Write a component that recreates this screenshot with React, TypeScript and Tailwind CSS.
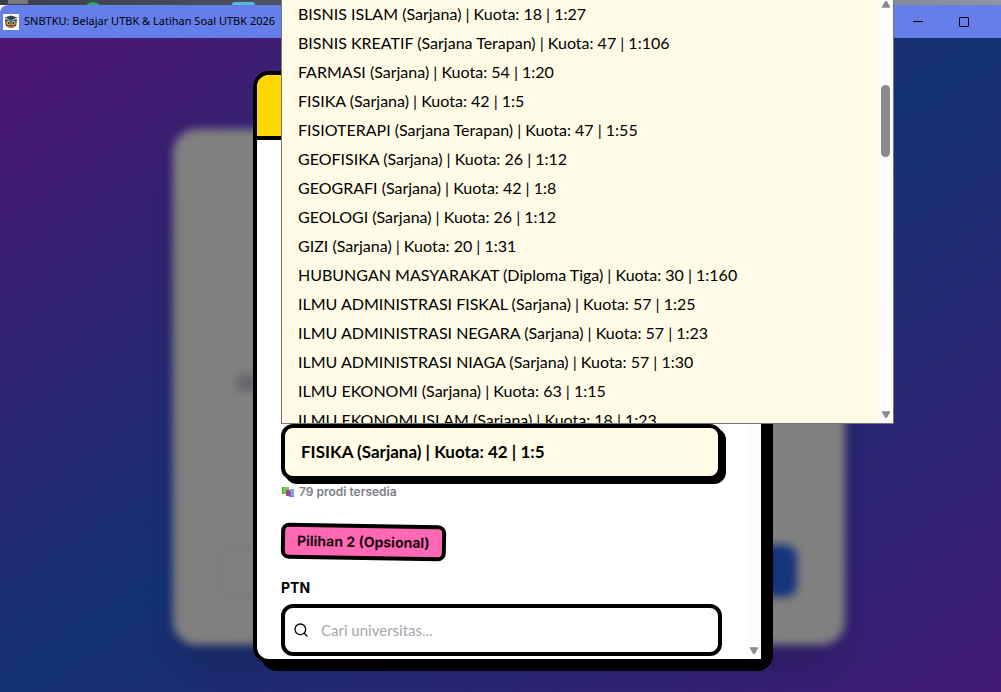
import { Search } from "lucide-react";

const programs = [
  "BISNIS ISLAM (Sarjana) | Kuota: 18 | 1:27",
  "BISNIS KREATIF (Sarjana Terapan) | Kuota: 47 | 1:106",
  "FARMASI (Sarjana) | Kuota: 54 | 1:20",
  "FISIKA (Sarjana) | Kuota: 42 | 1:5",
  "FISIOTERAPI (Sarjana Terapan) | Kuota: 47 | 1:55",
  "GEOFISIKA (Sarjana) | Kuota: 26 | 1:12",
  "GEOGRAFI (Sarjana) | Kuota: 42 | 1:8",
  "GEOLOGI (Sarjana) | Kuota: 26 | 1:12",
  "GIZI (Sarjana) | Kuota: 20 | 1:31",
  "HUBUNGAN MASYARAKAT (Diploma Tiga) | Kuota: 30 | 1:160",
  "ILMU ADMINISTRASI FISKAL (Sarjana) | Kuota: 57 | 1:25",
  "ILMU ADMINISTRASI NEGARA (Sarjana) | Kuota: 57 | 1:23",
  "ILMU ADMINISTRASI NIAGA (Sarjana) | Kuota: 57 | 1:30",
  "ILMU EKONOMI (Sarjana) | Kuota: 63 | 1:15",
  "ILMU EKONOMI ISLAM (Sarjana) | Kuota: 18 | 1:23",
];

function Arrow({ up = false }: { up?: boolean }) {
  return (
    <svg viewBox="0 0 10 8" className={up ? "w-[10px] h-2 rotate-180" : "w-[10px] h-2"} aria-hidden="true">
      <path d="M1.2 .8h7.6L5.6 6.4q-.6.8-1.2 0z" fill="#8b8b8b" stroke="#8b8b8b" strokeLinejoin="round" />
    </svg>
  );
}

function OwlIcon() {
  return (
    <svg viewBox="0 0 16 16" className="w-4 h-4 shrink-0" aria-hidden="true">
      <path fill="#fff" d="M0 0h16v16H0z" />
      <path d="M2 5l2 .5h8L14 5l-.6 6c-.6 2-3 3-5.4 3s-4.8-1-5.4-3z" fill="#5b4636" />
      <path d="M1.5 3.5 8 1.5l6.500 2L8 6z" fill="#33404d" />
      <path d="M4 5 8 6.500 12 5v1.500L8 8 4 6.500z" fill="#2d8fae" />
      <circle cx="5.4" cy="9" r="2" fill="#f1c27c" />
      <circle cx="10.6" cy="9" r="2" fill="#f1c27c" />
      <circle cx="5.6" cy="9" r=".9" fill="#1c1512" />
      <circle cx="10.4" cy="9" r=".9" fill="#1c1512" />
      <path d="M7 10h2l-1 2z" fill="#e98a2b" />
      <path d="M4 12.5q4 1.500 8 0" stroke="#c9a27a" fill="none" />
    </svg>
  );
}

function BooksIcon() {
  return (
    <svg viewBox="0 0 14 12" className="w-[14px] h-3 shrink-0" aria-hidden="true">
      <path d="M1 1h7v7H1z" fill="#7cc363" />
      <path d="M1 1h1v7H1z" fill="#5b9a4c" />
      <path d="M5 4h5v6H5z" fill="#a04a6c" />
      <path d="M9 3h4v8H9z" fill="#7fa5e8" />
      <path d="M8 6h2v5H8z" fill="#8a5bc0" />
      <path d="M9 10h4v1H9z" fill="#4a8fd0" />
    </svg>
  );
}

function TitleBar() {
  return (
    <header>
      <div className="h-[5px] flex items-start overflow-hidden bg-linear-to-r from-[#3b3f4b] via-[#5d6270] to-[#8c96a5]">
        <span className="ml-2 w-5 h-1 bg-[#77787f]" />
        <span className="ml-[56px] mt-0.5 w-[18px] h-[18px] shrink-0 rounded-full bg-[#22b35e]" />
        <span className="ml-[130px] mt-0.5 w-[23px] h-[3px] rounded-t bg-[#56b8dc]" />
      </div>
      <div className="h-[33px] flex items-center bg-[#667eea] rounded-tl-lg pl-[3px] font-['Noto_Sans',sans-serif]">
        <OwlIcon />
        <h1 className="ml-[5px] text-[11px] text-black whitespace-nowrap">
          SNBTKU: Belajar UTBK &amp; Latihan Soal UTBK 2026
        </h1>
        <div className="ml-auto flex">
          <button aria-label="Minimize" className="w-[46px] h-[33px] grid place-items-center">
            <span className="w-[10px] h-px bg-black" />
          </button>
          <button aria-label="Maximize" className="w-[46px] h-[33px] grid place-items-center">
            <span className="w-[10px] h-[10px] border border-black rounded-[1px]" />
          </button>
          <span className="w-[14px]" />
        </div>
      </div>
    </header>
  );
}

function BackgroundCard() {
  return (
    <section
      aria-hidden="true"
      className="col-start-1 row-start-1 w-full max-w-2xl mt-[91px] mb-[47px] p-12 flex flex-col justify-between rounded-3xl bg-[#808080] shadow-2xl blur-xs"
    >
      <div className="mt-[198px] ml-4 w-10 h-4 bg-[#62656a] rounded" />
      <div className="flex justify-between">
        <div className="w-40 h-[52px] rounded-xl border-2 border-[#777]" />
        <div className="w-40 h-[52px] rounded-xl bg-[#15337c]" />
      </div>
    </section>
  );
}

function ProgramList() {
  return (
    <div className="absolute bottom-full left-0 z-20 w-[613px] h-[424px] flex bg-[#fffbe7] border border-t-0 border-[#767676] overflow-hidden">
      <ul role="listbox" aria-label="Program studi" className="flex-1 -mt-px pl-4 overflow-hidden font-[Lato,sans-serif]">
        {programs.map(p => (
          <li key={p} role="option" aria-selected={p.startsWith("FISIKA")} className="h-[29px] flex items-center text-black whitespace-nowrap">
            {p}
          </li>
        ))}
      </ul>
      <div className="w-[15px] pb-1 flex flex-col items-center bg-[#fcfcfc]">
        <Arrow up />
        <div className="mt-[77px] w-[9px] h-[72px] rounded-full bg-[#8b8b8b]" />
        <div className="mt-auto">
          <Arrow />
        </div>
      </div>
    </div>
  );
}

function PilihanModal() {
  return (
    <section
      role="dialog"
      aria-label="Pilihan prodi"
      className="relative z-10 col-start-1 row-start-1 w-full max-w-lg mt-[33px] mb-[29px] flex flex-col bg-white border-4 border-black rounded-2xl shadow-[8px_8px_0_#000]"
    >
      <div className="h-[65px] shrink-0 bg-[#ffd700] border-b-4 border-black rounded-t-xl" />
      <div className="flex-1 flex">
        <form className="flex-1 px-6 pb-[3px] flex flex-col justify-end items-start" onSubmit={e => e.preventDefault()}>
          <div className="relative w-full">
            <ProgramList />
            <select
              aria-label="Program studi pilihan 1"
              defaultValue={programs[3]}
              className="block w-full h-14 px-4 appearance-none font-[Lato,sans-serif] text-[17px] font-bold text-black bg-[#fffbe7] border-4 border-black rounded-xl shadow-[4px_4px_0_#000]"
            >
              {programs.map(p => (
                <option key={p}>{p}</option>
              ))}
            </select>
          </div>
          <p className="mt-1 flex items-center gap-1 text-xs font-semibold text-[#7b7e85]">
            <BooksIcon />
            79 prodi tersedia
          </p>
          <h2 className="mt-6 px-3 py-1 text-sm leading-5 font-bold text-[#1a0a12] bg-[#ff69b4] border-4 border-black rounded-lg rotate-1">
            Pilihan 2 (Opsional)
          </h2>
          <label htmlFor="ptn" className="mt-4.5 mb-1.5 text-sm font-bold text-black">
            PTN
          </label>
          <div className="w-full h-[52px] px-2 flex items-center gap-3 bg-white border-4 border-black rounded-xl">
            <Search size={16} strokeWidth={2} color="#000" />
            <input
              id="ptn"
              placeholder="Cari universitas..."
              className="flex-1 min-w-0 font-[Lato,sans-serif] text-[15px] text-black placeholder:text-[#a3a7b0] outline-none"
            />
          </div>
        </form>
        <div className="w-[15px] pb-1 flex flex-col items-center justify-end bg-[#fcfcfc]">
          <Arrow />
        </div>
      </div>
    </section>
  );
}

export default function App() {
  return (
    <div className="min-h-screen flex flex-col overflow-hidden font-[Inter,sans-serif] text-base">
      <TitleBar />
      <main className="flex-1 grid justify-items-center pl-[17px] bg-[linear-gradient(to_bottom_right,#4e1572,#133273_50%,#421a76)]">
        <BackgroundCard />
        <PilihanModal />
      </main>
    </div>
  );
}
